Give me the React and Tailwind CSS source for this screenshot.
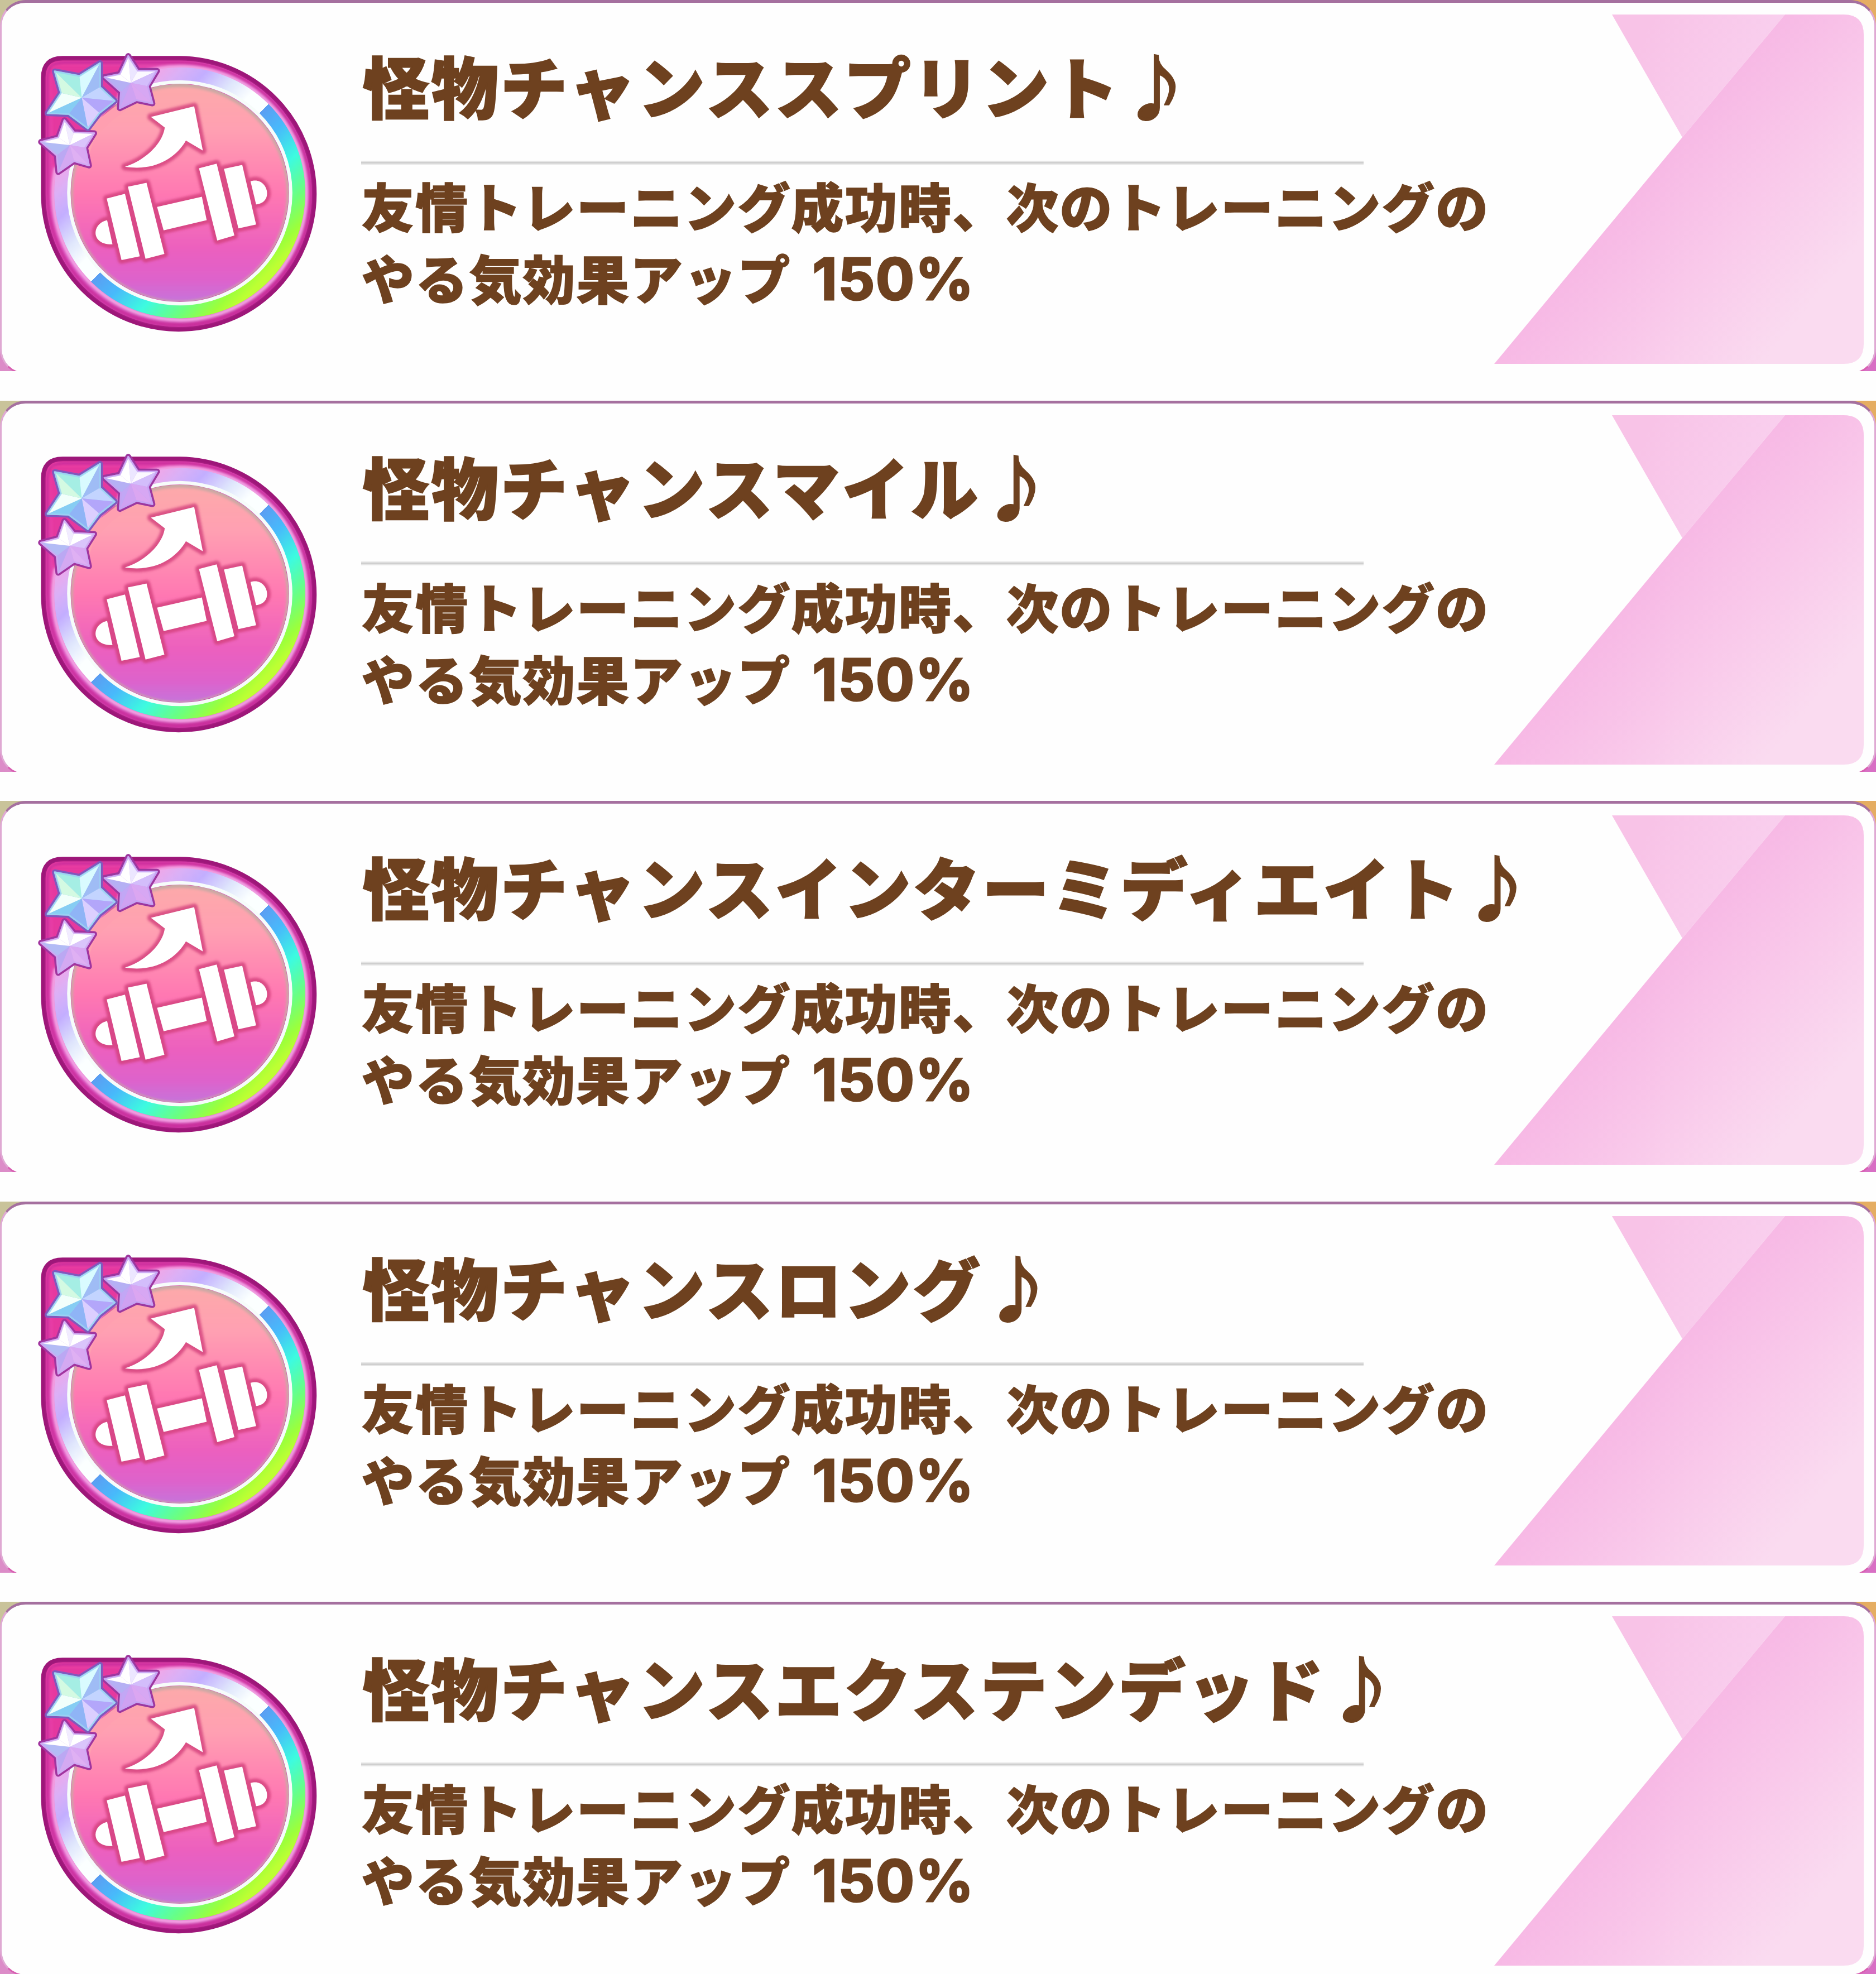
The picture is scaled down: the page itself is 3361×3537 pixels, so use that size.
import React from 'react';

const skills = [
  '怪物チャンススプリント',
  '怪物チャンスマイル',
  '怪物チャンスインターミディエイト',
  '怪物チャンスロング',
  '怪物チャンスエクステンデッド',
];

const bigStar = {
  center: [280, 305],
  tips: [[140, 168], [375, 125], [452, 322], [312, 465], [102, 386]],
  dips: [[268, 192], [375, 250], [372, 385], [212, 390], [172, 280]],
  colors: ['#a5eee4', '#d9fbff', '#9fbcf5', '#c3d4ff', '#b3a6fa', '#dccfff', '#8fb4f6', '#86cdf3', '#f2fffb', '#d3fae2'],
};

const topStar = {
  center: [535, 228],
  tips: [[522, 88], [672, 165], [648, 335], [478, 360], [398, 198]],
  dips: [[572, 165], [624, 245], [565, 318], [484, 275], [478, 182]],
  colors: ['#ece6ff', '#fbf8ff', '#d3bdfb', '#d7a7f3', '#dba6f1', '#cfa2f2', '#c2a7f5', '#b5b0f4', '#ffffff', '#ffffff'],
};

const sideStar = {
  center: [218, 552],
  tips: [[190, 422], [345, 490], [318, 658], [158, 692], [68, 535]],
  dips: [[240, 485], [298, 565], [240, 635], [150, 605], [158, 512]],
  colors: ['#f1ecff', '#ffffff', '#dac5fb', '#d9a8f2', '#dfb0f3', '#d4a9f2', '#bba8f3', '#b3bcf5', '#ffffff', '#ffffff'],
};

const Star = ({ star, edge, rim }) => {
  const ring = star.tips.flatMap((tip, i) => [tip, star.dips[i]]);
  const outline = ring.map((p) => p.join(',')).join(' ');

  return (
    <g strokeLinejoin="round">
      <polygon points={outline} fill={edge} stroke={edge} strokeWidth="30" />
      <polygon points={outline} fill={rim} stroke={rim} strokeWidth="8" />
      {ring.map((p, i) => {
        const next = ring[(i + 1) % ring.length];
        return (
          <polygon
            key={i}
            points={`${p.join(',')} ${next.join(',')} ${star.center.join(',')}`}
            fill={star.colors[i]}
          />
        );
      })}
      <polygon points={outline} fill="none" stroke={rim} strokeWidth="9" opacity="0.8" />
    </g>
  );
};

const Dumbbell = () => (
  <>
    <path d="M640 405L865 350L910 580L822 528C775 610 670 690 505 664C600 635 700 550 712 460Z" />
    <path d="M412 942C330 960 325 1072 440 1068Z" />
    <path d="M410 830L505 805L582 1130L487 1150Z" />
    <path d="M520 768L617 748L710 1118L612 1143Z" />
    <path d="M672 873L905 820L930 942L706 995Z" />
    <path d="M890 672L982 648L1074 1022L985 1048Z" />
    <path d="M1020 675L1115 655L1187 965L1095 985Z" />
    <path d="M1158 740C1245 710 1285 850 1187 860Z" />
  </>
);

const SkillIcon = () => (
  <svg viewBox="0 0 1568 1568" className="h-[540px] w-[540px] shrink-0">
    <defs>
      <linearGradient id="ring" gradientUnits="userSpaceOnUse" x1="350" y1="360" x2="1230" y2="1240">
        <stop offset="0.06" stopColor="#f3a6e6" />
        <stop offset="0.14" stopColor="#dbb0f6" />
        <stop offset="0.22" stopColor="#c3aeff" />
        <stop offset="0.33" stopColor="#dfe6fc" />
        <stop offset="0.42" stopColor="#fbffff" />
        <stop offset="0.5" stopColor="#fbffff" />
        <stop offset="0.5" stopColor="#5b9ef2" />
        <stop offset="0.6" stopColor="#48b9fb" />
        <stop offset="0.73" stopColor="#3dfbe0" />
        <stop offset="0.86" stopColor="#6dff7c" />
        <stop offset="0.95" stopColor="#9dff3a" />
        <stop offset="1" stopColor="#bdff33" />
      </linearGradient>
      <linearGradient id="disc" x1="0" y1="0" x2="0" y2="1">
        <stop offset="0" stopColor="#fda9aa" />
        <stop offset="0.2" stopColor="#ffa0b2" />
        <stop offset="0.5" stopColor="#ff78b2" />
        <stop offset="0.75" stopColor="#ec61be" />
        <stop offset="0.9" stopColor="#de62cb" />
        <stop offset="1" stopColor="#c773da" />
      </linearGradient>
      <linearGradient id="base" gradientUnits="userSpaceOnUse" x1="100" y1="120" x2="1300" y2="1320">
        <stop offset="0" stopColor="#ee3a9f" />
        <stop offset="0.5" stopColor="#d84fbd" />
        <stop offset="1" stopColor="#c2309b" />
      </linearGradient>
      <filter id="soft" x="-10%" y="-10%" width="120%" height="120%">
        <feGaussianBlur stdDeviation="6" />
      </filter>
    </defs>

    <path
      d="M180 100H790A705 705 0 1 1 80 805V200Q80 100 180 100Z"
      fill="url(#base)"
      stroke="#9d1779"
      strokeWidth="24"
    />
    <path
      d="M185 122H790A683 683 0 1 1 102 805V205Q102 122 185 122Z"
      fill="none"
      stroke="#cb2f9c"
      strokeWidth="16"
      filter="url(#soft)"
    />
    <circle cx="790" cy="803" r="658" fill="none" stroke="#f3a3e4" strokeWidth="22" filter="url(#soft)" />
    <circle cx="790" cy="800" r="616" fill="none" stroke="url(#ring)" strokeWidth="74" />
    <circle cx="790" cy="800" r="566" fill="#c9a9a4" />
    <circle cx="790" cy="806" r="556" fill="url(#disc)" filter="url(#soft)" />
    <circle cx="790" cy="800" r="577" fill="none" stroke="#f6fcfa" strokeWidth="18" />

    <g fill="#d33f7c" stroke="#d33f7c" strokeWidth="38" strokeLinejoin="round" opacity="0.8" filter="url(#soft)">
      <Dumbbell />
    </g>
    <g fill="#ffffff">
      <Dumbbell />
    </g>

    {/* magenta corner and disc edge under the stars */}
    <path d="M125 140H520L450 350L350 430L290 500L215 640L130 670Z" fill="#e5389f" filter="url(#soft)" />
    <path d="M455 350L510 370L430 430L345 520L320 600L300 500L350 430Z" fill="#ff9fb0" />
    <Star star={topStar} edge="#9c379f" rim="#c5a3f3" />
    <Star star={sideStar} edge="#a1359f" rim="#cfa9f3" />
    <Star star={bigStar} edge="#8058bd" rim="#9bd2f2" />
  </svg>
);

const Ribbon = () => (
  <svg viewBox="2670 20 680 640" className="absolute left-[2670px] top-[20px] h-[640px] w-[680px]">
    <defs>
      <linearGradient id="fold" gradientUnits="userSpaceOnUse" x1="2930" y1="100" x2="3130" y2="190">
        <stop offset="0" stopColor="#f8c3e7" />
        <stop offset="1" stopColor="#f9cfee" />
      </linearGradient>
      <linearGradient id="sheet" gradientUnits="userSpaceOnUse" x1="2990" y1="275" x2="3275" y2="510">
        <stop offset="0" stopColor="#f7b9e5" />
        <stop offset="0.45" stopColor="#f9c8ea" />
        <stop offset="1" stopColor="#fadbf0" />
      </linearGradient>
    </defs>
    <path d="M2888 26H3198L3014 246Z" fill="url(#fold)" />
    <path d="M3198 26H3303Q3339 26 3339 62V616Q3339 652 3303 652H2677L3014 246Z" fill="url(#sheet)" />
  </svg>
);

const SkillCard = ({ title }) => (
  <div className="relative h-[665px] w-full shrink-0 overflow-hidden bg-[linear-gradient(90deg,#c9c39a_0,#c9c39a_50%,#e5ad62_50%)] last:h-[667px]">
    <div className="absolute inset-x-0 bottom-0 h-[330px] bg-[linear-gradient(90deg,#dc8cc8,#d86fc4)]" />
    <div className="relative flex h-[671px] w-full rounded-[46px] border-x-[3px] border-t-[5px] border-b-[3px] border-x-[#dfa9d3] border-b-[#d85fb2] border-t-[#a5709f] bg-[#fefefe]">
      <div className="ml-[47px] mt-[65px]">
        <SkillIcon />
      </div>
      <div className="ml-[57px] flex flex-col text-[#6e411f]">
        <h2 className="ml-[2px] mt-[84px] h-[124px] whitespace-nowrap text-[120px] font-black leading-[124px] tracking-[3.8px] [-webkit-text-stroke:2.5px_#6e411f]">
          {title}
          <span className="ml-[3px] text-[123px] leading-none [-webkit-text-stroke:6px_#6e411f]">♪</span>
        </h2>
        <div className="mt-[75px] h-[7px] w-[1796px] border-y-2 border-[#e6e6e6] bg-[#cfcfcf]" />
        <p className="ml-px mt-[8px] whitespace-nowrap text-[94px] font-black leading-[129px] tracking-[2.2px] [-webkit-text-stroke:1.5px_#6e411f]">
          友情トレーニング成功時、次のトレーニングの
          <br />
          やる気効果アップ
          <span className="ml-[38px] font-['Inter',sans-serif] text-[103px] font-bold leading-none tracking-[1.5px] [-webkit-text-stroke:3px_#6e411f]">
            150%
          </span>
        </p>
      </div>
    </div>
    <Ribbon />
  </div>
);

const App = () => {
  return (
    <div className="flex h-[3537px] w-[3361px] flex-col gap-[52.5px] overflow-hidden bg-[#fefefe] font-['Noto_Sans_CJK_JP',sans-serif]">
      {skills.map((title) => (
        <SkillCard key={title} title={title} />
      ))}
    </div>
  );
};

export default App;
